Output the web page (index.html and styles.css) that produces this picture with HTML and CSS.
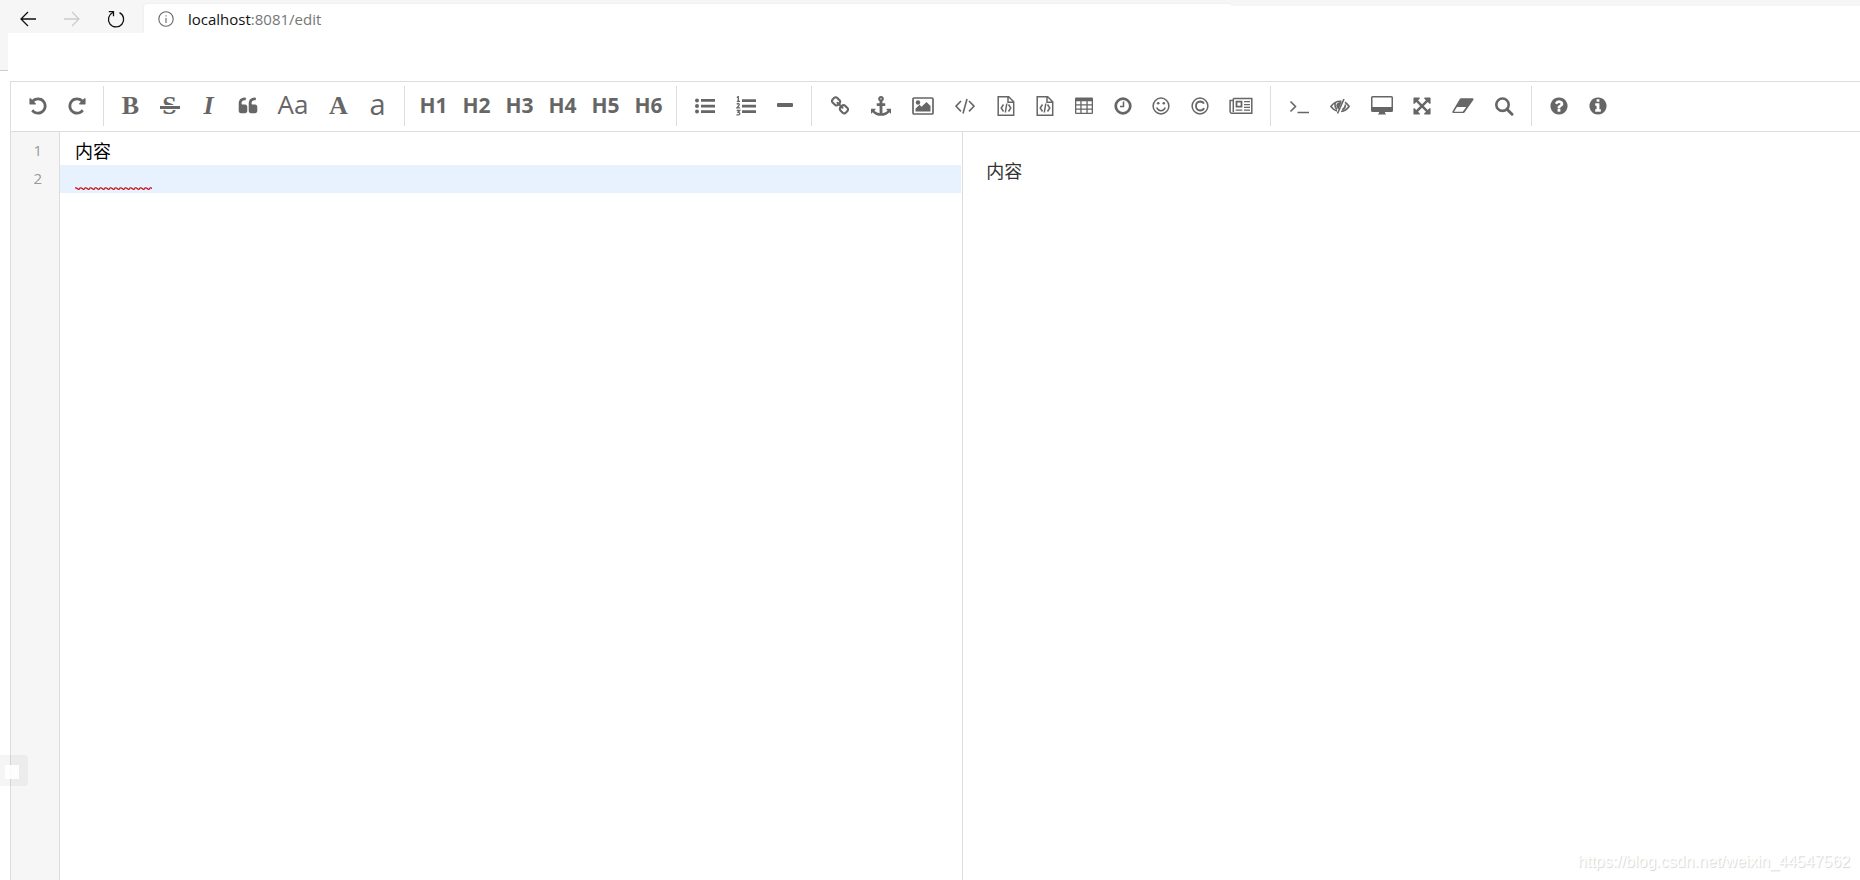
FILE: index.html
```html
<!DOCTYPE html>
<html lang="zh-CN">
<head>
<meta charset="utf-8">
<title>localhost:8081/edit</title>
<link rel="stylesheet" href="styles.css">
</head>
<body>
<header class="browser">
  <nav class="nav">
    <button class="nav-btn" aria-label="Back"><svg width="18" height="18" viewBox="0 0 18 18" fill="none" stroke="#111" stroke-width="1.300"><path d="M17 9H2M9 2L2 9l7 7"/></svg></button>
    <button class="nav-btn" aria-label="Forward" disabled><svg width="18" height="18" viewBox="0 0 18 18" fill="none" stroke="#ccc" stroke-width="1.300"><path d="M1 9h15M9 2l7 7-7 7"/></svg></button>
    <button class="nav-btn" aria-label="Reload"><svg width="18" height="18" viewBox="0 0 18 18" fill="none" stroke="#111" stroke-width="1.300"><path d="M12.500 2.600A7.600 7.600 0 1 1 5.800 2.500M1.800 1.600h4.700v4.700"/></svg></button>
  </nav>
  <div class="address">
    <svg width="16" height="16" viewBox="0 0 16 16" fill="none" stroke="#666" stroke-width="1.100"><circle cx="8" cy="8" r="7.200"/><path d="M8 7v5M8 4.300v1.300"/></svg>
    <div class="url"><span class="host">localhost</span>:8081/edit</div>
  </div>
  <div class="browser-rest"></div>
</header>
<div class="page-top"><div class="page-edge"></div></div>

<main class="editor">
  <div class="toolbar" role="toolbar" aria-label="Markdown">
    <div class="group">
      <button class="tool" aria-label="Undo"><svg class="ico" viewBox="0 0 1792 1792"><path id="undo" d="M1664 896q0 156-61 298t-164 245-245 164-298 61q-172 0-327-72.500t-264-204.500q-7-10-6.500-22.500t8.500-20.500l137-138q10-9 25-9 16 2 23 12 73 95 179 147t225 52q104 0 198.500-40.500t163.500-109.500 109.500-163.500 40.500-198.500-40.500-198.500-109.500-163.500-163.500-109.500-198.500-40.500q-98 0-188 35.500t-160 101.500l137 138q31 30 14 69-17 40-59 40h-448q-26 0-45-19t-19-45v-448q0-42 40-59 39-17 69 14l130 129q107-101 244.500-156.500t284.500-55.500q156 0 298 61t245 164 164 245 61 298z"/></svg></button>
      <button class="tool" aria-label="Redo"><svg class="ico" viewBox="0 0 1792 1792"><use href="#undo" transform="translate(1792 0) scale(-1 1)"/></svg></button>
    </div>
    <div class="group">
      <button class="tool serif" aria-label="Bold">B</button>
      <button class="tool serif strike" aria-label="Strikethrough">S</button>
      <button class="tool serif slant" aria-label="Italic">I</button>
      <button class="tool" aria-label="Quote"><svg class="ico" viewBox="0 0 1792 1792"><path d="M832 960v384q0 80-56 136t-136 56h-384q-80 0-136-56t-56-136v-704q0-104 40.500-198.500t109.500-163.500 163.500-109.500 198.500-40.500h64q26 0 45 19t19 45v128q0 26-19 45t-45 19h-64q-106 0-181 75t-75 181v32q0 40 28 68t68 28h224q80 0 136 56t56 136zm896 0v384q0 80-56 136t-136 56h-384q-80 0-136-56t-56-136v-704q0-104 40.500-198.500t109.500-163.500 163.500-109.500 198.500-40.500h64q26 0 45 19t19 45v128q0 26-19 45t-45 19h-64q-106 0-181 75t-75 181v32q0 40 28 68t68 28h224q80 0 136 56t56 136z"/></svg></button>
      <button class="tool letter xwide" aria-label="Capitalize words">Aa</button>
      <button class="tool serif" aria-label="Uppercase">A</button>
      <button class="tool letter lower" aria-label="Lowercase">a</button>
    </div>
    <div class="group heads">
      <button class="tool head">H1</button>
      <button class="tool head">H2</button>
      <button class="tool head">H3</button>
      <button class="tool head">H4</button>
      <button class="tool head">H5</button>
      <button class="tool head">H6</button>
    </div>
    <div class="group">
      <button class="tool mid" aria-label="Bulleted list"><svg class="ico" viewBox="0 0 20 20"><circle cx="2" cy="4.500" r="2"/><circle cx="2" cy="10" r="2"/><circle cx="2" cy="15.500" r="2"/><path d="M6 3h14v2.700H6zM6 8.700h14v2.700H6zM6 14.300h14V17H6z"/></svg></button>
      <button class="tool mid" aria-label="Numbered list"><svg class="ico" viewBox="0 0 20 20"><path d="M6 3.300h14V6H6zM6 8.700h14v2.700H6zM6 14.200h14v2.700H6z"/><path fill="none" stroke="#666" stroke-width="1.300" d="M.8 1.500L2.300.6v4.700M.8 5.300h3.200M.8 8.300q1-1.200 2-.5t-.3 2.200L.9 11.900h3.200M.7 14.500h3L2.200 16.400q1.800 0 1.500 1.600-.6 1.400-3.200.6"/></svg></button>
      <button class="tool slim" aria-label="Horizontal line"><svg class="ico" viewBox="0 0 20 20"><rect x="2" y="7" width="16" height="4" rx="1"/></svg></button>
    </div>
    <div class="group">
      <button class="tool mid" aria-label="Link"><svg class="ico" viewBox="0 0 1792 1792"><path d="M1520 1216q0-40-28-68l-208-208q-28-28-68-28-42 0-72 32 3 3 19 18.500t21.500 21.500 15 19 13 25.500 3.500 27.500q0 40-28 68t-68 28q-15 0-27.500-3.500t-25.500-13-19-15-21.500-21.500-18.500-19q-33 31-33 73 0 40 28 68l206 207q27 27 68 27 40 0 68-26l147-146q28-28 28-67zm-703-705q0-40-28-68l-206-207q-28-28-68-28-39 0-68 27l-147 146q-28 28-28 67 0 40 28 68l208 208q27 27 68 27 42 0 72-31-3-3-19-18.500t-21.500-21.500-15-19-13-25.500-3.500-27.500q0-40 28-68t68-28q15 0 27.500 3.500t25.500 13 19 15 21.500 21.500 18.500 19q33-31 33-73zm895 705q0 120-85 203l-147 146q-83 83-203 83-121 0-204-85l-206-207q-83-83-83-203 0-123 88-209l-88-88q-86 88-208 88-120 0-204-84l-208-208q-84-84-84-204t85-203l147-146q83-83 203-83 121 0 204 85l206 207q83 83 83 203 0 123-88 209l88 88q86-88 208-88 120 0 204 84l208 208q84 84 84 204z"/></svg></button>
      <button class="tool mid" aria-label="Anchor"><svg class="ico" viewBox="0 0 1792 1792"><path d="M960 256q0-26-19-45t-45-19-45 19-19 45 19 45 45 19 45-19 19-45zm832 928v352q0 22-20 30-8 2-12 2-13 0-23-9l-93-93q-119 143-318.500 226.500t-429.500 83.500-429.500-83.500-318.500-226.500l-93 93q-9 9-23 9-4 0-12-2-20-8-20-30v-352q0-14 9-23t23-9h352q22 0 30 20 8 19-7 35l-100 100q67 91 189.500 153.500t271.500 82.500v-647h-192q-26 0-45-19t-19-45v-128q0-26 19-45t45-19h192v-163q-58-34-93-92.500t-35-128.500q0-106 75-181t181-75 181 75 75 181q0 70-35 128.500t-93 92.500v163h192q26 0 45 19t19 45v128q0 26-19 45t-45 19h-192v647q149-20 271.500-82.500t189.500-153.500l-100-100q-15-16-7-35 8-20 30-20h352q14 0 23 9t9 23z"/></svg></button>
      <button class="tool wide" aria-label="Image"><svg class="ico ico-wide" viewBox="0 0 22 20"><rect x="1" y="2" width="20" height="16" rx="1" fill="none" stroke="#666" stroke-width="1.700"/><circle cx="6" cy="6.500" r="2.200"/><path d="M3.500 15.500v-2.700l4-4 2 2L14.500 6l4 4v5.500z"/></svg></button>
      <button class="tool code" aria-label="Inline code"><svg class="ico" viewBox="0 0 20 20" fill="none" stroke="#666" stroke-width="1.600"><path d="M6 5l-5 5.200 5 5.200M14 5l5 5.200-5 5.200M12 3L8 17.500"/></svg></button>
      <button class="tool" aria-label="Preformatted text"><svg class="ico" viewBox="0 0 20 20" fill="none" stroke="#666" stroke-width="1.500"><g id="filecode"><path d="M2.200.8h10.500l5 5v13.500H2.200zM12 .8v5.500h5.700M7.500 8.500L5.200 12l2.300 3.500M12.500 8.500l2.300 3.500-2.300 3.500M10.800 7.500L9.300 16.500"/></g></svg></button>
      <button class="tool" aria-label="Code block"><svg class="ico" viewBox="0 0 20 20" fill="none" stroke="#666" stroke-width="1.500"><use href="#filecode"/></svg></button>
      <button class="tool" aria-label="Table"><svg class="ico" viewBox="0 0 20 20"><path fill-rule="evenodd" d="M2 1.500h16q1 0 1 1V17q0 1-1 1H2q-1 0-1-1V2.500q0-1 1-1zM2.300 5.300v3h4v-3zm5.300 0v3h4.800v-3zm6.100 0v3h4v-3zM2.300 9.500v3h4v-3zm5.300 0v3h4.800v-3zm6.100 0v3h4v-3zM2.300 13.700v3h4v-3zm5.300 0v3h4.800v-3zm6.100 0v3h4v-3z"/></svg></button>
      <button class="tool" aria-label="Date and time"><svg class="ico" viewBox="0 0 20 20" fill="none" stroke="#666"><circle cx="10" cy="10" r="7.300" stroke-width="2.700"/><path d="M10.500 5.500v5H7" stroke-width="1.500"/></svg></button>
      <button class="tool slim" aria-label="Emoji"><svg class="ico" viewBox="0 0 20 20"><circle cx="10" cy="10" r="7.900" fill="none" stroke="#666" stroke-width="1.500"/><circle cx="7.200" cy="7.200" r="1.300"/><circle cx="12.800" cy="7.200" r="1.300"/><path d="M5.700 11.500q1.200 3.200 4.300 3.200t4.300-3.200" fill="none" stroke="#666" stroke-width="1.500"/></svg></button>
      <button class="tool" aria-label="HTML entities"><svg class="ico" viewBox="0 0 20 20" fill="none" stroke="#666"><circle cx="10" cy="10" r="7.900" stroke-width="1.500"/><path d="M13.900 7.700Q13 5.500 10.200 5.500 6 5.800 6 10t4.200 4.500q2.900 0 3.800-2.300" stroke-width="1.800"/></svg></button>
      <button class="tool news" aria-label="Page break"><svg class="ico ico-news" viewBox="0 0 24 20"><path fill="none" stroke="#666" stroke-width="1.500" d="M4.300 2.500h18.500v14.800H2.600q-1.500 0-1.500-1.700V4.500h3.200M4.300 2.500V16"/><path fill="none" stroke="#666" stroke-width="1.800" d="M7.500 5.700h5v5h-5z"/><path d="M15 5h6v1.300h-6zM15 7.900h6v1.300h-6zM15 10.700h6V12h-6zM6.700 13.500h6.600v1.300H6.700zM15 13.500h6v1.300h-6z"/></svg></button>
    </div>
    <div class="group">
      <button class="tool mid" aria-label="Go to line"><svg class="ico" viewBox="0 0 20 20" fill="none" stroke="#666" stroke-width="1.600"><path d="M1.500 5.500l5 5-5 5M8.500 16.500H20"/></svg></button>
      <button class="tool mid" aria-label="Toggle preview"><svg class="ico" viewBox="0 0 20 20"><path fill="none" stroke="#666" stroke-width="1.600" d="M7 15.100Q3.500 14 .9 10.500 4.500 5.200 10 5.200l1.500.2M15 6.200q2.400 1.500 4.100 4.300-3.200 4.500-8 5M14 3L7.500 17.500M5.600 7.100q-1.800 3.500 1.500 6.200M15.300 8.500q.5 3.600-3.100 5.200"/><path d="M11.700 6L8.400 13.500Q5.800 11.700 6.300 9 7.300 5.700 11.700 6z"/></svg></button>
      <button class="tool wide" aria-label="Full preview"><svg class="ico ico-wide" viewBox="0 0 22 20"><path fill-rule="evenodd" d="M1.500 0h19Q22 0 22 1.500v13q0 1.500-1.500 1.500H14v1.200l1 .8v.5H7V18l1-.8V16H1.500Q0 16 0 14.500v-13Q0 0 1.500 0zM1.500 1.400V11h19V1.400z"/></svg></button>
      <button class="tool slim" aria-label="Fullscreen"><svg class="ico" viewBox="0 0 1792 1792"><path d="M1411 541l-355 355 355 355 144-144q29-31 70-14 39 17 39 59v448q0 26-19 45t-45 19h-448q-42 0-59-40-17-39 14-69l144-144-355-355-355 355 144 144q31 30 14 69-17 40-59 40h-448q-26 0-45-19t-19-45v-448q0-42 40-59 39-17 69 14l144 144 355-355-355-355-144 144q-19 19-45 19-12 0-24-5-40-17-40-59v-448q0-26 19-45t45-19h448q42 0 59 40 17 39-14 69l-144 144 355 355 355-355-144-144q-31-30-14-69 17-40 59-40h448q26 0 45 19t19 45v448q0 42-39 59-13 5-25 5-26 0-45-19z"/></svg></button>
      <button class="tool wide" aria-label="Clear"><svg class="ico ico-wide" viewBox="0 0 22 20"><path fill-rule="evenodd" d="M9 2.300h11.500q1.500.2.800 1.700L12.500 16.500q-.6.600-1.500.6H1.300q-1.500-.3-.9-1.700L7.800 3Q8.300 2.300 9 2.300zM5 11l-3 4.700h8.700l3.500-4.700z"/></svg></button>
      <button class="tool search" aria-label="Search"><svg class="ico" viewBox="0 0 20 20" fill="none" stroke="#666"><circle cx="8.500" cy="8.700" r="6.200" stroke-width="2.600"/><path d="M13 13.200l5 5" stroke-width="3" stroke-linecap="round"/></svg></button>
    </div>
    <div class="group last">
      <button class="tool" aria-label="Help"><svg class="ico" viewBox="0 0 1792 1792"><path d="M1024 1376v-192q0-14-9-23t-23-9h-192q-14 0-23 9t-9 23v192q0 14 9 23t23 9h192q14 0 23-9t9-23zm256-672q0-88-55.500-163t-138.500-116-170-41q-243 0-371 213-15 24 8 42l132 100q7 6 19 6 16 0 25-12 53-68 86-92 34-24 86-24 48 0 85.500 26t37.500 59q0 38-20 61t-68 45q-63 28-115.500 86.500t-52.500 125.500v36q0 14 9 23t23 9h192q14 0 23-9t9-23q0-19 21.500-49.500t54.500-49.500q32-18 49-28.500t46-35 44.500-48 28-60.500 12.500-81zm384 192q0 209-103 385.500t-279.500 279.500-385.500 103-385.500-103-279.500-279.500-103-385.500 103-385.500 279.500-279.500 385.500-103 385.500 103 279.500 279.500 103 385.500z"/></svg></button>
      <button class="tool" aria-label="About"><svg class="ico" viewBox="0 0 1792 1792"><path d="M1152 1376v-160q0-14-9-23t-23-9h-96v-512q0-14-9-23t-23-9h-320q-14 0-23 9t-9 23v160q0 14 9 23t23 9h96v320h-96q-14 0-23 9t-9 23v160q0 14 9 23t23 9h448q14 0 23-9t9-23zm-128-896v-160q0-14-9-23t-23-9h-192q-14 0-23 9t-9 23v160q0 14 9 23t23 9h192q14 0 23-9t9-23zm640 416q0 209-103 385.500t-279.500 279.500-385.500 103-385.500-103-279.500-279.500-103-385.500 103-385.500 279.500-279.500 385.500-103 385.500 103 279.500 279.500 103 385.500z"/></svg></button>
    </div>
  </div>

  <div class="panes">
    <div class="source">
      <div class="gutter"><span>1</span><span>2</span></div>
      <div class="code-area">
        <textarea class="input" aria-label="Markdown source" spellcheck="false">内容
</textarea>
        <svg class="squiggle" width="77" height="3"><defs><pattern id="wave" width="5" height="3" patternUnits="userSpaceOnUse"><path d="M-1 1.500L0 1q1.200-.6 2.500.8T5 1l1-.5" fill="none" stroke="#c8141e" stroke-width="1.300"/></pattern></defs><rect width="77" height="3" fill="url(#wave)"/></svg>
      </div>
    </div>
    <article class="preview"><p>内容</p></article>
  </div>
</main>

<div class="float-widget"></div>
<div class="watermark">https://blog.csdn.net/weixin_44547562</div>
</body>
</html>
```
FILE: styles.css
```css
* { box-sizing: border-box; }

body {
  margin: 0;
  height: 100vh;
  display: flex;
  flex-direction: column;
  overflow: hidden;
  position: relative;
  background: #fff;
  font-family: "Open Sans", "Noto Sans CJK SC", sans-serif;
}

button {
  border: 0;
  padding: 0;
  background: none;
  color: inherit;
  font: inherit;
}

/* Browser chrome */
.browser {
  display: flex;
  height: 33px;
  flex: none;
  overflow: hidden;
  background: #f6f6f6;
}
.nav {
  display: flex;
  gap: 26px;
  padding: 4px 19px 0;
  width: 144px;
  flex: none;
}
.nav-btn {
  display: flex;
  align-items: center;
  height: 29px;
}
.address {
  flex: 0 1 1088px;
  display: flex;
  align-items: center;
  gap: 14px;
  margin-top: 4px;
  padding-left: 14px;
  background: #fff;
  border-radius: 3px 3px 0 0;
  box-shadow: 0 0 2px #e4e4e4;
}
.url {
  font-size: 15px;
  line-height: 20px;
  color: #767676;
}
.host { color: #111; }
.browser-rest {
  flex: 1;
  margin-top: 6px;
  background: #fff;
}
.page-top {
  height: 48px;
  flex: none;
}
.page-edge {
  width: 8px;
  height: 38px;
  background: #f6f6f6;
  border-bottom: 1px solid #ccc;
}

/* Editor */
.editor {
  flex: 1;
  min-height: 0;
  display: flex;
  flex-direction: column;
  margin-left: 10px;
  border: 1px solid #ddd;
  border-width: 1px 0 0 1px;
}
.toolbar {
  display: flex;
  padding: 4px 0 5px;
  border-bottom: 1px solid #ddd;
  color: #666;
}
.group {
  display: flex;
  height: 40px;
  padding: 0 7px;
  border-right: 1px solid #ddd;
}
.heads { padding-right: 6px; }
.last { border-right: 0; }
.tool {
  display: flex;
  align-items: center;
  justify-content: center;
  width: 39px;
  height: 40px;
  position: relative;
}
.slim { width: 38px; }
.search { width: 40px; }
.mid { width: 41px; }
.code { width: 42px; }
.wide, .head { width: 43px; }
.news { width: 44px; }
.xwide { width: 52px; }
.ico {
  display: block;
  width: 20px;
  height: 20px;
  fill: #666;
}
.ico-wide { width: 22px; }
.ico-news { width: 24px; }
.ico[fill="none"] { fill: none; }
.serif {
  font: bold 26px/40px "Liberation Serif", serif;
}
.strike::after {
  content: "";
  position: absolute;
  left: 10px;
  right: 9px;
  top: 19px;
  height: 3px;
  border: solid #fff;
  border-width: 1px 0;
  background: #666;
}
.slant { font-style: italic; }
.letter {
  font-size: 26px;
  line-height: 36px;
  padding-bottom: 4px;
}
.lower { font-size: 29px; }
.head {
  font-size: 21px;
  font-weight: bold;
  padding-bottom: 2px;
}

.panes {
  flex: 1;
  min-height: 0;
  display: grid;
  grid-template-columns: 51.5% 1fr;
}
.source {
  display: flex;
  border-right: 1px solid #ddd;
}
.gutter {
  display: flex;
  flex-direction: column;
  width: 49px;
  padding: 4px 17px 0 0;
  background: #f6f6f6;
  border-right: 1px solid #ddd;
  color: #999;
  font-size: 15px;
  line-height: 28px;
  text-align: right;
}
.code-area {
  flex: 1;
  position: relative;
  display: flex;
  padding-right: 1px;
}
.input {
  flex: 1;
  margin: 0;
  padding: 4px 15px;
  border: 0;
  outline: 0;
  resize: none;
  background: linear-gradient(#e8f2ff, #e8f2ff) 0 33px / 100% 28px no-repeat;
  color: #000;
  font: 18px/28px "Noto Sans CJK SC", sans-serif;
}
.squiggle {
  position: absolute;
  left: 15px;
  top: 55px;
}
.preview {
  padding: 24px 23px;
  color: #333;
  font: 18px/28px "Noto Sans CJK SC", sans-serif;
}
.preview p { margin: 0; }

/* Overlays */
.float-widget {
  position: absolute;
  left: 0;
  bottom: 94px;
  width: 28px;
  height: 31px;
  border: solid rgba(0, 0, 0, .04);
  border-width: 10px 9px 7px 5px;
  border-radius: 0 3px 3px 0;
  background: rgba(255, 255, 255, .8);
  background-clip: padding-box;
}
.watermark {
  position: absolute;
  right: 10px;
  bottom: 8px;
  font: 16px/20px "Liberation Sans", sans-serif;
  color: #fff;
  text-shadow: 1px 1px 1px #d4d4d4;
}
```
